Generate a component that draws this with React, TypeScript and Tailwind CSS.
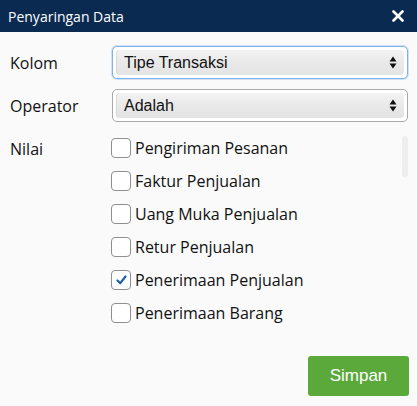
import React, { useState } from "react";

const items = [
  "Pengiriman Pesanan",
  "Faktur Penjualan",
  "Uang Muka Penjualan",
  "Retur Penjualan",
  "Penerimaan Penjualan",
  "Penerimaan Barang",
];

function SelectBox({ value, focused }: { value: string; focused?: boolean }) {
  return (
    <div
      className={
        "flex h-[33px] w-[296px] items-center rounded-[5px] border bg-white px-[3px] " +
        (focused
          ? "border-[#7fb2e8] shadow-[0_0_0_1px_rgba(127,178,232,0.35)]"
          : "border-[#a9a9a9]")
      }
    >
      <div className="flex h-[25px] w-full items-center justify-between rounded-[4px] bg-gradient-to-b from-[#f3f3f3] via-[#e9e9e9] to-[#e4e4e4] pl-[8px] pr-[7px] shadow-[inset_1px_0_0_#d8d8d8]">
        <span className="text-[16px] text-[#111] [font-family:'Liberation_Sans',Arial,sans-serif]">
          {value}
        </span>
        <svg width="8" height="13" viewBox="0 0 8 13">
          <path d="M4 0.5 L7.5 5.5 L0.5 5.5 Z" fill="#111" />
          <path d="M4 12.5 L7.5 7.5 L0.5 7.5 Z" fill="#111" />
        </svg>
      </div>
    </div>
  );
}

export default function App() {
  const [checked, setChecked] = useState<string[]>(["Penerimaan Penjualan"]);

  function toggle(name: string) {
    setChecked(
      checked.includes(name)
        ? checked.filter((c) => c !== name)
        : [...checked, name]
    );
  }

  return (
    <div className="flex h-[406px] w-[417px] flex-col bg-[#fafafa] [font-family:'Open_Sans',sans-serif]">
      <div className="flex h-[32px] items-center justify-between bg-[#0b2a52] pl-[8px] pr-[13px]">
        <span className="text-[14px] text-white">Penyaringan Data</span>
        <svg width="12" height="12" viewBox="0 0 12 12">
          <path
            d="M1.5 1.5 L10.5 10.5 M10.5 1.5 L1.5 10.5"
            stroke="#fff"
            strokeWidth="2.6"
            strokeLinecap="round"
          />
        </svg>
      </div>

      <div className="flex flex-col pl-[10px] pt-[14px]">
        <div className="flex items-center">
          <span className="w-[102px] text-[16px] text-[#111]">Kolom</span>
          <SelectBox value="Tipe Transaksi" focused />
        </div>
        <div className="mt-[10px] flex items-center">
          <span className="w-[102px] text-[16px] text-[#111]">Operator</span>
          <SelectBox value="Adalah" />
        </div>

        <div className="mt-[12px] flex">
          <span className="w-[101px] pt-[3px] text-[16px] text-[#111]">Nilai</span>
          <div className="flex flex-1 flex-col gap-[13px] pt-[4px]">
            {items.map((name) => {
              const on = checked.includes(name);
              return (
                <label
                  key={name}
                  className="flex h-[20px] cursor-pointer items-center gap-[4px]"
                  onClick={() => toggle(name)}
                >
                  <span className="flex h-[20px] w-[20px] items-center justify-center rounded-[4px] border border-[#8f8f8f] bg-white">
                    {on && (
                      <svg width="11" height="10" viewBox="0 0 11 10">
                        <path
                          d="M1.5 5.5 L4.3 8.2 L9.5 1.5"
                          stroke="#1b5fa6"
                          strokeWidth="2.2"
                          fill="none"
                          strokeLinecap="round"
                          strokeLinejoin="round"
                        />
                      </svg>
                    )}
                  </span>
                  <span className="text-[16px] text-[#111]">{name}</span>
                </label>
              );
            })}
          </div>
          <div className="mr-[9px] mt-[2px] h-[41px] w-[6px] rounded-full bg-[#eeeeee]" />
        </div>
      </div>

      <div className="flex flex-1 items-end justify-end pb-[10px] pr-[8px]">
        <button className="h-[40px] w-[101px] rounded-[3px] bg-[#5ba83b] text-[17px] text-white [font-family:'Liberation_Sans',Arial,sans-serif]">
          Simpan
        </button>
      </div>
    </div>
  );
}
